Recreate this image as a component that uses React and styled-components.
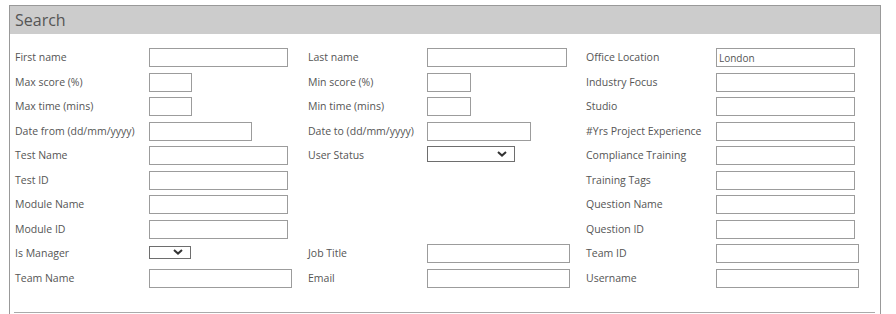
import React from "react";
import styled, { createGlobalStyle } from "styled-components";

const GlobalStyle = createGlobalStyle`
   body {
      margin: 0;
      background: #fff;
      font-family: "Open Sans", "Noto Sans", sans-serif;
   }
`;

const Panel = styled.div`
   margin: 5px 0 0 9px;
   width: 872px;
   box-sizing: border-box;
   border: 1px solid #999;
   border-bottom: none;
   padding-bottom: 30px;
`;

const Header = styled.div`
   height: 28px;
   background: #cccccc;
   display: flex;
   align-items: center;
   padding-left: 5px;
   font-size: 16px;
   color: #555;
`;

const FormGrid = styled.div`
   display: grid;
   grid-template-columns: 134px 159px 119px 159px 130px 1fr;
   grid-auto-rows: 24.5px;
   align-items: center;
   padding: 11.25px 0 0 5px;
`;

const Label = styled.div`
   font-size: 10.5px;
   color: #555;
   white-space: nowrap;
   margin-bottom: 1px;
`;

const TextInput = styled.input`
   display: block;
   box-sizing: border-box;
   width: ${(p) => p.$w}px;
   height: 19px;
   margin: 0;
   border: 1px solid #9c9c9c;
   padding: 0 2px;
   font-family: inherit;
   font-size: 10px;
   color: #555;
   outline: none;
`;

const SelectWrap = styled.div`
   position: relative;
   width: ${(p) => p.$w}px;
   height: ${(p) => p.$h}px;
   margin-bottom: 3px;
`;

const Select = styled.select`
   display: block;
   appearance: none;
   box-sizing: border-box;
   width: 100%;
   height: 100%;
   margin: 0;
   border: 1px solid #6e6e6e;
   border-radius: 0;
   background: #fff;
`;

const Chevron = styled.svg`
   position: absolute;
   right: ${(p) => p.$r}px;
   top: 0;
   bottom: 0;
   margin: auto 0;
   pointer-events: none;
`;

const Divider = styled.div`
   margin: 21.75px 5px 0 4px;
   border-top: 1px solid #aaa;
`;

const rows = [
   [
      { label: "First name", w: 139 },
      { label: "Last name", w: 140 },
      { label: "Office Location", w: 139, value: "London" },
   ],
   [
      { label: "Max score (%)", w: 43 },
      { label: "Min score (%)", w: 44 },
      { label: "Industry Focus", w: 139 },
   ],
   [
      { label: "Max time (mins)", w: 43 },
      { label: "Min time (mins)", w: 44 },
      { label: "Studio", w: 139 },
   ],
   [
      { label: "Date from (dd/mm/yyyy)", w: 103 },
      { label: "Date to (dd/mm/yyyy)", w: 104 },
      { label: "#Yrs Project Experience", w: 139 },
   ],
   [
      { label: "Test Name", w: 139 },
      { label: "User Status", select: true, w: 88, h: 16, r: 8 },
      { label: "Compliance Training", w: 139 },
   ],
   [{ label: "Test ID", w: 139 }, null, { label: "Training Tags", w: 139 }],
   [{ label: "Module Name", w: 139 }, null, { label: "Question Name", w: 139 }],
   [{ label: "Module ID", w: 139 }, null, { label: "Question ID", w: 139 }],
   [
      { label: "Is Manager", select: true, w: 42, h: 13, r: 8 },
      { label: "Job Title", w: 143 },
      { label: "Team ID", w: 143 },
   ],
   [
      { label: "Team Name", w: 143 },
      { label: "Email", w: 143 },
      { label: "Username", w: 143 },
   ],
];

const Field = ({ f }) => {
   if (!f) {
      return (
         <>
            <div />
            <div />
         </>
      );
   }
   return (
      <>
         <Label>{f.label}</Label>
         <div>
            {f.select ? (
               <SelectWrap $w={f.w} $h={f.h}>
                  <Select>
                     <option></option>
                  </Select>
                  <Chevron $r={f.r} width="10" height="6" viewBox="0 0 10 6">
                     <path d="M1 1 L5 4.6 L9 1" fill="none" stroke="#333" strokeWidth="2" />
                  </Chevron>
               </SelectWrap>
            ) : (
               <TextInput $w={f.w} defaultValue={f.value || ""} />
            )}
         </div>
      </>
   );
};

export default function App() {
   return (
      <>
         <GlobalStyle />
         <Panel>
            <Header>Search</Header>
            <FormGrid>
               {rows.map((row, i) => (
                  <React.Fragment key={i}>
                     {row.map((f, j) => (
                        <Field key={j} f={f} />
                     ))}
                  </React.Fragment>
               ))}
            </FormGrid>
            <Divider />
         </Panel>
      </>
   );
}
